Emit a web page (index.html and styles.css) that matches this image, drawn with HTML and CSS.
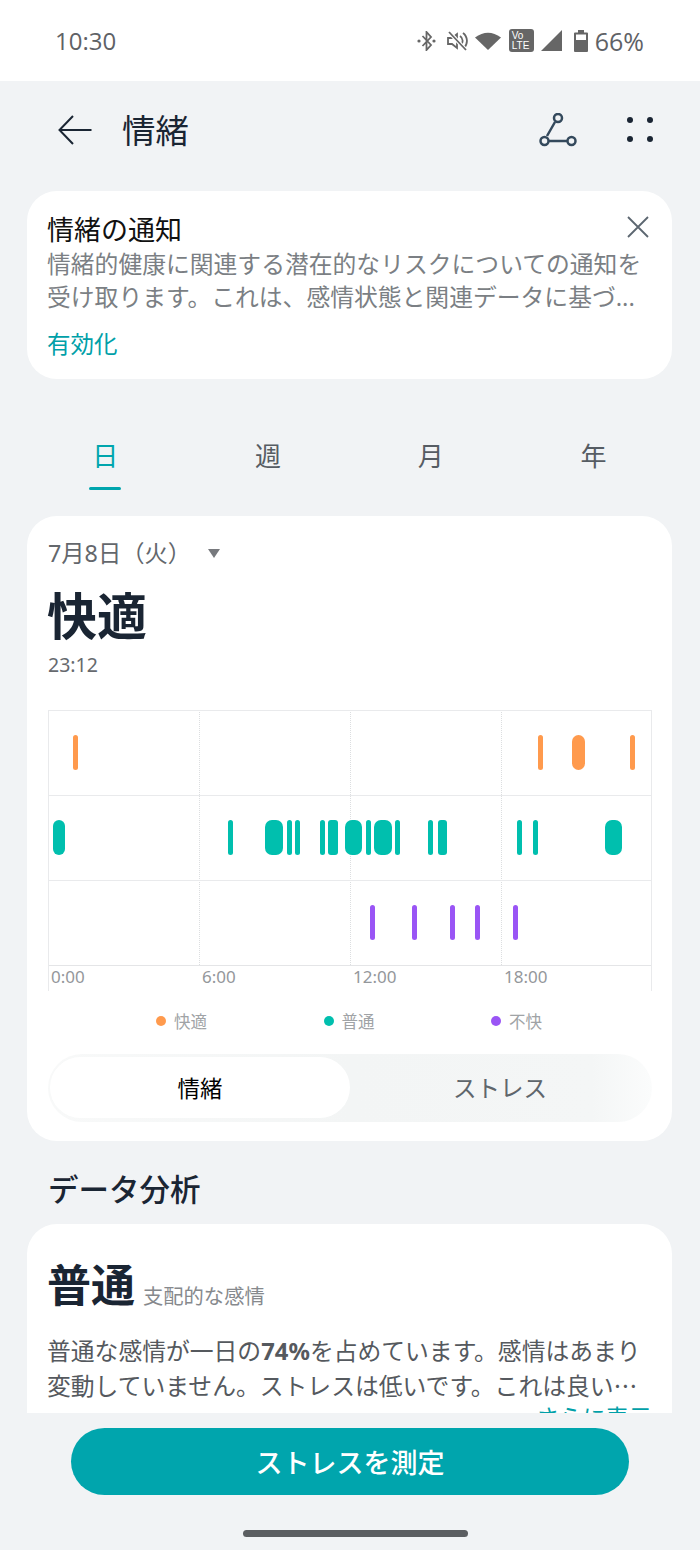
FILE: index.html
```html
<!DOCTYPE html>
<html lang="ja">
<head>
  <meta charset="UTF-8">
  <title>情緒</title>
  <link rel="stylesheet" href="styles.css">
</head>
<body>
<div class="phone">

  <!-- ステータスバー -->
  <div class="statusbar">
    <span class="clock">10:30</span>
    <div class="status-icons">
      <svg class="ic-bt" width="19" height="20" viewBox="0 0 19 20"><path d="M5.500 5l8.500 9-4.500 5V1L14 6l-8.500 9" fill="none" stroke="#666" stroke-width="1.800"/><circle cx="2" cy="10" r="1.600" fill="#666"/><circle cx="17" cy="10" r="1.600" fill="#666"/></svg>
      <svg class="ic-mute" width="21" height="20" viewBox="0 0 21 20"><path d="M1 7h4l5-4v14l-5-4H1z" fill="none" stroke="#666" stroke-width="1.800"/><path d="M13 5a6 6 0 0 1 1 9M16 2a10 10 0 0 1 1 15" fill="none" stroke="#666" stroke-width="1.800"/><path d="M2 1l17 18" stroke="#fff" stroke-width="4"/><path d="M2 1l17 18" stroke="#666" stroke-width="1.800"/></svg>
      <svg class="ic-wifi" width="26" height="18" viewBox="0 0 26 18"><path d="M0 5.500Q13-4 26 5.500L13 18z" fill="#666"/></svg>
      <div class="volte">Vo<br>LTE</div>
      <svg class="ic-signal" width="21" height="21" viewBox="0 0 21 21"><path d="M21 0v21H0z" fill="#666"/></svg>
      <svg class="ic-batt" width="14" height="22" viewBox="0 0 14 22"><path d="M4 0h6v2.500h3a1 1 0 0 1 1 1V21a1 1 0 0 1-1 1H1a1 1 0 0 1-1-1V3.500a1 1 0 0 1 1-1h3z" fill="#666"/><rect x="2" y="4.500" width="10" height="5.500" fill="#fff"/></svg>
      <span class="batt-text">66%</span>
    </div>
  </div>

  <div class="scroll">
    <!-- ヘッダー -->
    <header class="appbar">
      <svg class="back" width="34" height="30" viewBox="0 0 34 30"><path d="M33.500 15H1.500M15 1L1.500 15 15 29" fill="none" stroke="#1a2533" stroke-width="2"/></svg>
      <h1 class="title">情緒</h1>
      <svg class="share" width="38" height="34" viewBox="0 0 38 34"><path d="M16 9L8 23M10 28h19" stroke="#34495c" stroke-width="2.500" fill="none"/><circle cx="19" cy="5" r="4" fill="none" stroke="#34495c" stroke-width="2.500"/><circle cx="5.500" cy="28" r="4" fill="none" stroke="#34495c" stroke-width="2.500"/><circle cx="32.500" cy="28" r="4" fill="none" stroke="#34495c" stroke-width="2.500"/></svg>
      <svg class="more" width="26" height="26" viewBox="0 0 26 26"><circle cx="3" cy="3" r="3"/><circle cx="23" cy="3" r="3"/><circle cx="3" cy="22" r="3"/><circle cx="23" cy="22" r="3"/></svg>
    </header>

    <!-- 通知カード -->
    <section class="card notice">
      <svg class="close" width="22" height="22" viewBox="0 0 22 22"><path d="M1 1l20 20M21 1L1 21" stroke="#5c6670" stroke-width="1.800"/></svg>
      <div class="notice-title">情緒の通知</div>
      <p class="notice-text">情緒的健康に関連する潜在的なリスクについての通知を受け取ります。これは、感情状態と関連データに基づ...</p>
      <a class="enable">有効化</a>
    </section>

    <!-- 期間タブ -->
    <nav class="tabs">
      <div class="tab active">日</div>
      <div class="tab">週</div>
      <div class="tab">月</div>
      <div class="tab">年</div>
    </nav>

    <!-- チャートカード -->
    <section class="card chart-card">
      <div class="date">7月8日（火）<span class="caret"></span></div>
      <div class="mood">快適</div>
      <div class="time">23:12</div>

      <div class="chart">
        <div class="vline" style="left:151px"></div>
        <div class="vline" style="left:302px"></div>
        <div class="vline" style="left:453px"></div>

        <div class="row pleasant">
          <i style="left:24.500px;width:5px"></i>
          <i style="left:490px;width:5px"></i>
          <i style="left:523.500px;width:13.500px"></i>
          <i style="left:582px;width:5px"></i>
        </div>
        <div class="row normal">
          <i style="left:4.500px;width:12px"></i>
          <i style="left:179.500px;width:5px"></i>
          <i style="left:217px;width:18px"></i>
          <i style="left:238.500px;width:5px"></i>
          <i style="left:247px;width:5px"></i>
          <i style="left:271.500px;width:5px"></i>
          <i style="left:280px;width:9.500px"></i>
          <i style="left:297px;width:17px"></i>
          <i style="left:318px;width:5px"></i>
          <i style="left:326px;width:18px"></i>
          <i style="left:347px;width:5px"></i>
          <i style="left:380px;width:5px"></i>
          <i style="left:389.500px;width:9px"></i>
          <i style="left:468.500px;width:5px"></i>
          <i style="left:485px;width:5px"></i>
          <i style="left:557px;width:17px"></i>
        </div>
        <div class="row unpleasant">
          <i style="left:322px;width:5px"></i>
          <i style="left:364px;width:5px"></i>
          <i style="left:402px;width:5px"></i>
          <i style="left:427px;width:5px"></i>
          <i style="left:464.500px;width:5px"></i>
        </div>
        <div class="axis">
          <span>0:00</span><span>6:00</span><span>12:00</span><span>18:00</span>
        </div>
      </div>

      <div class="legend">
        <div class="legend-item"><b class="dot orange"></b>快適</div>
        <div class="legend-item"><b class="dot teal"></b>普通</div>
        <div class="legend-item"><b class="dot purple"></b>不快</div>
      </div>

      <div class="segment">
        <div class="seg on">情緒</div>
        <div class="seg">ストレス</div>
      </div>
    </section>

    <h2 class="section-title">データ分析</h2>

    <!-- データ分析カード -->
    <section class="card analysis">
      <div class="analysis-head"><span class="big">普通</span><span class="sub">支配的な感情</span></div>
      <p class="analysis-text">普通な感情が一日の<b>74%</b>を占めています。感情はあまり変動していません。ストレスは低いです。これは良い<span class="ell">…</span></p>
      <a class="more-link">さらに表示</a>
    </section>
  </div>

  <!-- 下部ボタン -->
  <footer class="bottom">
    <button class="measure">ストレスを測定</button>
    <div class="homebar"></div>
  </footer>

</div>
</body>
</html>
```

FILE: styles.css
```css
/* 全体 */
* {
  box-sizing: border-box;
}

html, body {
  margin: 0;
  padding: 0;
}

body {
  font-family: "Noto Sans", "Noto Sans CJK JP", sans-serif;
  color: #1a2533;
  background-color: #f1f3f5;
}

.phone {
  width: 700px;
  height: 1550px;
  display: flex;
  flex-direction: column;
  overflow: hidden;
}

.ell {
  font-family: "Noto Sans CJK JP", sans-serif;
}

/* ステータスバー */
.statusbar {
  height: 81px;
  flex: none;
  background-color: #fff;
  display: flex;
  align-items: center;
  justify-content: space-between;
  padding: 0 56px 0 55px;
  color: #5f6266;
}

.clock {
  font-family: "Open Sans", sans-serif;
  font-size: 24px;
}

.status-icons {
  display: flex;
  align-items: center;
}

.ic-mute { margin-left: 11px; }
.ic-wifi { margin-left: 7px; }
.ic-signal { margin-left: 7px; }
.ic-batt { margin-left: 12px; }

.volte {
  margin-left: 8px;
  width: 25px;
  height: 23px;
  background-color: #666;
  border-radius: 3px;
  color: #fff;
  font-family: "Liberation Sans", sans-serif;
  font-size: 10px;
  line-height: 10px;
  padding: 1.500px 0 0 3px;
}

.batt-text {
  margin-left: 7px;
  font-family: "Open Sans", sans-serif;
  font-size: 25px;
}

/* スクロール領域 */
.scroll {
  height: 1332px;
  flex: none;
  overflow: hidden;
}

/* ヘッダー */
.appbar {
  height: 110px;
  display: flex;
  align-items: center;
  padding: 0 47px 12px 58px;
}

.title {
  margin: 0 0 4px 30px;
  font-size: 33.500px;
  font-weight: 400;
  flex: 1;
}

.share {
  margin-right: 1px;
  margin-left: 2px;
}

.more {
  margin-left: 49px;
  fill: #1a2533;
}

/* カード */
.card {
  background-color: #fff;
  border-radius: 30px;
  margin: 0 28px 0 27px;
}

/* 通知カード */
.notice {
  position: relative;
  height: 188px;
  padding: 20px 20px;
}

.close {
  position: absolute;
  top: 25px;
  right: 23px;
}

.notice-title {
  font-size: 27px;
  line-height: 38px;
  color: #111;
}

.notice-text {
  margin: -1px 0 0;
  font-size: 23.800px;
  line-height: 33px;
  color: #7b7f84;
  height: 66px;
  overflow: hidden;
}

.enable {
  display: block;
  margin-top: 13px;
  font-size: 23.500px;
  line-height: 34px;
  color: #00a0a8;
}

/* 期間タブ */
.tabs {
  display: grid;
  grid-template-columns: repeat(4, 162.700px);
  height: 137px;
  padding: 53px 0 0 24px;
}

.tab {
  position: relative;
  text-align: center;
  font-size: 26px;
  line-height: 48px;
  color: #565c63;
}

.tab.active {
  color: #00a5ad;
}

.tab.active::after {
  content: "";
  position: absolute;
  left: 65px;
  top: 55px;
  width: 32px;
  height: 3px;
  border-radius: 2px;
  background-color: #00a5ad;
}

/* チャートカード */
.chart-card {
  height: 625px;
  padding: 21px 20px 0 21px;
}

.date {
  font-size: 23.300px;
  line-height: 32px;
  color: #63676c;
  display: flex;
  align-items: center;
}

.caret {
  margin-left: 17px;
  width: 0;
  height: 0;
  border-left: 6.500px solid transparent;
  border-right: 6.500px solid transparent;
  border-top: 9px solid #77797d;
}

.mood {
  font-size: 50px;
  font-weight: 700;
  line-height: 72px;
  margin: 11px 0 0 -1px;
  color: #1a2533;
}

.time {
  font-size: 19.500px;
  line-height: 26px;
  color: #66696e;
}

/* チャート */
.chart {
  position: relative;
  margin-top: 32px;
  height: 281px;
  border-left: 1px solid #e9eaec;
  border-right: 1px solid #e9eaec;
}

.vline {
  position: absolute;
  top: 0;
  height: 255px;
  margin-left: -1px;
  border-left: 1px dotted #dcdee0;
}

.row {
  position: relative;
  height: 85px;
  border-top: 1px solid #e9eaec;
}

.row i {
  position: absolute;
  top: 24px;
  height: 35px;
  margin-left: -1px;
  border-radius: 3px;
}

.row i[style*="width:1"] {
  border-radius: 7px;
}

.pleasant i { background-color: #ff9a4d; }
.normal i { background-color: #00bfae; }
.unpleasant i { background-color: #9a55f5; }

.axis {
  height: 26px;
  border-top: 1px solid #e4e5e7;
  display: grid;
  grid-template-columns: repeat(4, 151px);
  padding-left: 2px;
  font-size: 17px;
  line-height: 22px;
  color: #94979b;
}

/* 凡例 */
.legend {
  display: grid;
  grid-template-columns: repeat(3, 167.500px);
  padding-left: 108px;
  margin-top: 16px;
  height: 28px;
}

.legend-item {
  display: flex;
  align-items: center;
  font-size: 16.500px;
  color: #a0a3a6;
}

.dot {
  width: 10px;
  height: 10px;
  border-radius: 50%;
  margin-right: 8px;
}

.orange { background-color: #ff9a4d; }
.teal { background-color: #00bfae; }
.purple { background-color: #9a55f5; }

/* 切り替え */
.segment {
  margin-top: 19px;
  height: 68px;
  width: 604px;
  border-radius: 34px;
  padding: 3px 2px;
  display: flex;
  background: linear-gradient(90deg, #f8f9f9 0%, #f3f5f5 50%, #f4f6f6 90%, #fbfcfc 100%);
}

.seg {
  width: 300px;
  height: 61px;
  border-radius: 31px;
  text-align: center;
  font-size: 23.500px;
  line-height: 63px;
  color: #5f666c;
}

.seg.on {
  background-color: #fff;
  color: #000;
  font-size: 22.500px;
}

/* データ分析 */
.section-title {
  margin: 26px 0 13px 48px;
  font-size: 30.500px;
  font-weight: 500;
  line-height: 44px;
  color: #1a2533;
}

.analysis {
  height: 260px;
  padding: 31px 20px 0;
}

.analysis-head {
  display: flex;
  align-items: baseline;
  line-height: 60px;
}

.big {
  font-size: 44px;
  font-weight: 700;
  color: #1a2533;
}

.sub {
  margin-left: 8px;
  font-size: 20.300px;
  color: #86898d;
  position: relative;
  top: 2px;
}

.analysis-text {
  margin: 11px 0 0;
  font-size: 23.800px;
  line-height: 33px;
  color: #55595e;
}

.analysis-text b {
  font-weight: 700;
}

.more-link {
  display: block;
  text-align: right;
  font-size: 23.200px;
  line-height: 28px;
  color: #00a0a8;
}

/* 下部ボタン */
.bottom {
  flex: 1;
  position: relative;
  padding-top: 15px;
}

.measure {
  display: block;
  margin: 0 auto 0 71px;
  width: 558px;
  height: 67px;
  border: none;
  border-radius: 34px;
  background-color: #00a5ad;
  color: #fff;
  font-family: inherit;
  font-size: 27px;
  font-weight: 500;
  padding: 0;
}

.homebar {
  margin: 35px 0 0 243px;
  width: 225px;
  height: 7px;
  border-radius: 4px;
  background-color: #5b5e61;
}
```
